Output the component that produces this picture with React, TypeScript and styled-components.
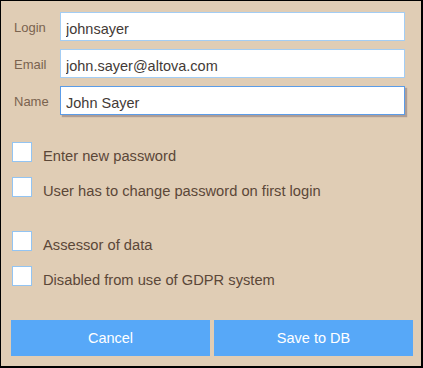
import React from "react";
import styled, { createGlobalStyle } from "styled-components";

const Global = createGlobalStyle`
  html, body { margin: 0; padding: 0; background: #ffffff; }
  * { box-sizing: border-box; }
`;

const Frame = styled.div`
  width: 423px;
  height: 368px;
  background: #e0cdb5;
  border-style: solid;
  border-color: #000;
  border-width: 1px 2px 2px 1px;
  padding: 11px 8px 0 10px;
  display: flex;
  flex-direction: column;
  font-family: "Liberation Sans", Arial, sans-serif;
`;

const Fields = styled.div`
  display: flex;
  flex-direction: column;
  gap: 8px;
`;

const FieldRow = styled.div`
  display: flex;
  align-items: center;
  height: 29px;
`;

const FieldLabel = styled.label`
  width: 49px;
  padding-left: 3px;
  padding-top: 2px;
  font-size: 13px;
  line-height: 15px;
  color: #7a634f;
`;

const TextInput = styled.input<{ $focused?: boolean }>`
  width: 345px;
  height: 29px;
  margin: 0;
  padding: 4px 5px 0 5px;
  border: 1px solid ${(p) => (p.$focused ? "#5b9ce8" : "#a3cdf4")};
  box-shadow: ${(p) => (p.$focused ? "2px 2px 1px rgba(80, 70, 90, 0.35)" : "none")};
  background: #fff;
  outline: none;
  font-family: "Liberation Sans", Arial, sans-serif;
  font-size: 14.5px;
  color: #433a36;
`;

const CheckGroup = styled.div<{ $top: number }>`
  display: flex;
  flex-direction: column;
  gap: 12px;
  margin-top: ${(p) => p.$top}px;
`;

const CheckRow = styled.label`
  display: flex;
  align-items: flex-start;
  height: 23px;
`;

const Box = styled.span`
  width: 20px;
  height: 20px;
  margin-left: 1px;
  background: #fff;
  border: 1px solid #93c4f2;
  flex: none;
`;

const CheckText = styled.span`
  margin-left: 11px;
  margin-top: 6px;
  font-size: 14.7px;
  line-height: 17px;
  color: #5b4738;
`;

const Buttons = styled.div`
  display: flex;
  gap: 4px;
  margin-top: 31px;
`;

const Button = styled.button`
  width: 199px;
  height: 36px;
  border: none;
  border-radius: 0;
  background: #57a8f8;
  color: #fff;
  font-family: "Liberation Sans", Arial, sans-serif;
  font-size: 14.5px;
  padding: 0;
  cursor: pointer;
`;

export default function App() {
  return (
    <>
      <Global />
      <Frame>
        <Fields>
          <FieldRow>
            <FieldLabel>Login</FieldLabel>
            <TextInput defaultValue="johnsayer" />
          </FieldRow>
          <FieldRow>
            <FieldLabel>Email</FieldLabel>
            <TextInput defaultValue="john.sayer@altova.com" />
          </FieldRow>
          <FieldRow>
            <FieldLabel>Name</FieldLabel>
            <TextInput $focused defaultValue="John Sayer" />
          </FieldRow>
        </Fields>
        <CheckGroup $top={27}>
          <CheckRow>
            <Box />
            <CheckText>Enter new password</CheckText>
          </CheckRow>
          <CheckRow>
            <Box />
            <CheckText>User has to change password on first login</CheckText>
          </CheckRow>
        </CheckGroup>
        <CheckGroup $top={31}>
          <CheckRow>
            <Box />
            <CheckText>Assessor of data</CheckText>
          </CheckRow>
          <CheckRow>
            <Box />
            <CheckText>Disabled from use of GDPR system</CheckText>
          </CheckRow>
        </CheckGroup>
        <Buttons>
          <Button>Cancel</Button>
          <Button>Save to DB</Button>
        </Buttons>
      </Frame>
    </>
  );
}
